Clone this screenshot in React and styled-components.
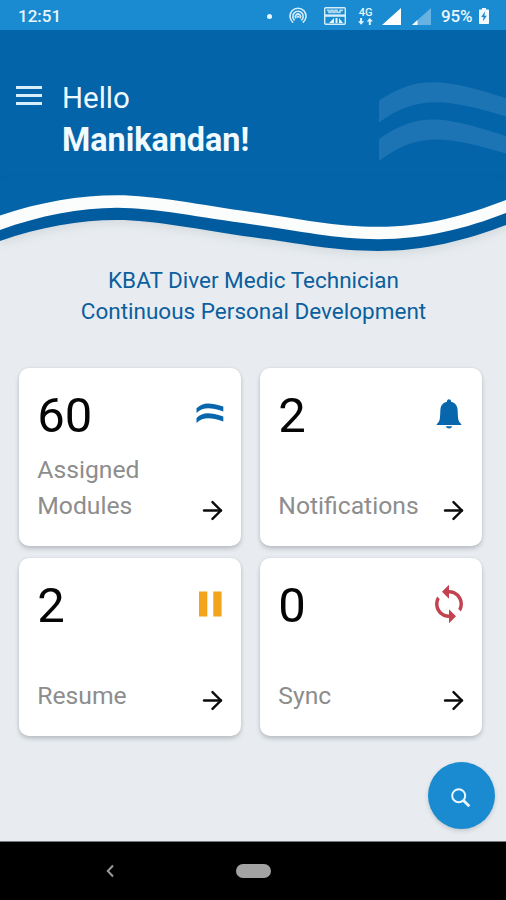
import styled, { createGlobalStyle } from "styled-components";
import { ArrowRight } from "lucide-react";
import { MdSync } from "react-icons/md";

const tiles = [
    { count: "60", label: "Assigned Modules", icon: "modules", inset: -3 },
    { count: "2", label: "Notifications", icon: "bell", inset: -1 },
    { count: "2", label: "Resume", icon: "pause", inset: -4 },
    { count: "0", label: "Sync", icon: "sync", inset: -1 },
];

const HotspotIcon = () => (
    <svg width="18" height="18" viewBox="0 0 18 18" fill="none" stroke="#d5eefb" strokeWidth="1.6">
        <path d="M4.2 15.6A8 8 0 1 1 13.8 15.6" />
        <path d="M5.6 13.4A5.2 5.2 0 1 1 12.4 13.4" />
        <path d="M7.2 11.3A2.5 2.5 0 1 1 10.8 11.3" />
        <circle cx="9" cy="9.6" r="1.2" fill="#d5eefb" stroke="none" />
    </svg>
);

const VolteIcon = () => (
    <svg width="22" height="18" viewBox="0 0 22 18">
        <rect x="0.7" y="0.7" width="20.6" height="16.6" rx="1" fill="none" stroke="#d5eefb" strokeWidth="1.4" />
        <rect x="1" y="7.4" width="20" height="2.4" fill="#d5eefb" />
        <path d="M3 3.4h2v2h2v-2h2v2h2v-2h2v2h3v-2h3" fill="none" stroke="#b5dcf3" strokeWidth="1.6" />
        <path d="M5 16l5-5v5zM11.5 16v-5h2v5zM15 16v-5l4 5z" fill="#e8f6fd" />
    </svg>
);

const DataIcon = () => (
    <svg width="15" height="7" viewBox="0 0 15 7" fill="#e3f3fc">
        <path d="M2.1 0h2v3.2h2.1L3.1 6.8 0 3.2h2.1zM10.8 7h2V3.6h2.1L11.8 0 8.7 3.6h2.1z" />
    </svg>
);

const BatteryIcon = () => (
    <svg width="10" height="16" viewBox="0 0 10 16">
        <path d="M3 0h4v1.5h2.2q.8 0 .8.8v12.9q0 .8-.8.8H.8q-.8 0-.8-.8V2.3q0-.8.8-.8H3z" fill="#eff9fe" />
        <path d="M6 3.5L2.2 9h2.3L4 13.3 7.8 7.8H5.5z" fill="#1a8bd1" />
    </svg>
);

const TileIcon = ({ name }) => {
    if (name === "modules") {
        return (
            <svg width="28" height="21" viewBox="0 0 28 21" fill="#0866ad">
                <path d="M.5 5.3C7-.8 13-1 27.3 3.6v4.8C14 4.2 7.5 4 .5 9.9z" />
                <path d="M.5 15C7 9 13 9 27.3 13.6v4.8C14 14.2 7.5 14 .5 19.9z" />
            </svg>
        );
    }
    if (name === "bell") {
        return (
            <svg width="26" height="30" viewBox="0 0 26 30" fill="#0866ad">
                <path d="M13 .3c1.3 0 2.1.9 2.1 2.4 3.9.8 6.2 3.7 6.5 8 .3 4.800.2 8 .9 10.3.5 1.7 1.5 2.7 2.9 4.4v.6H.6v-.6c1.4-1.7 2.4-2.7 2.9-4.4.7-2.3.6-5.5.9-10.3.3-4.3 2.6-7.2 6.500-8 0-1.500.8-2.400 2.100-2.400z" />
                <path d="M9.9 27.3h6.2c-.5 1.5-1.6 2.2-3.1 2.2s-2.6-.7-3.1-2.2z" />
            </svg>
        );
    }
    if (name === "pause") {
        return (
            <svg width="23" height="26" viewBox="0 0 23 26" fill="#f2a41b">
                <rect x="0" y="0.5" width="8.3" height="25" />
                <rect x="14.3" y="0.5" width="8.3" height="25" />
            </svg>
        );
    }
    return <MdSync size={42} color="#c2434f" />;
};

const App = () => {
    return (
        <Screen>
            <GlobalStyle />
            <StatusBar>
                <Clock>12:51</Clock>
                <StatusIcons>
                    <Dot />
                    <HotspotIcon />
                    <VolteIcon />
                    <Network>
                        <span>4G</span>
                        <DataIcon />
                    </Network>
                    <svg width="19" height="17" viewBox="0 0 19 17">
                        <path d="M0 17L19 0v17z" fill="#fff" />
                    </svg>
                    <svg width="19" height="17" viewBox="0 0 19 17">
                        <path d="M0 17L19 0v17z" fill="#66b3e3" />
                        <path d="M0 17L5.5 12v5z" fill="#fff" />
                    </svg>
                    <Percent>95%</Percent>
                    <BatteryIcon />
                </StatusIcons>
            </StatusBar>
            <Header>
                <Menu aria-label="Menu">
                    <span />
                    <span />
                    <span />
                </Menu>
                <Greeting>
                    <Hello>Hello</Hello>
                    <Name>Manikandan!</Name>
                </Greeting>
                <Ripple width="127" height="80" viewBox="0 0 127 80" fill="#1d74b5">
                    <path d="M0 19.5C38-5 60-4 127 17v18.5C66 17 38 14 0 41.5z" />
                    <path d="M0 58C38 32 60 33 127 55v17.5C66 54 38 51 0 80z" />
                </Ripple>
            </Header>
            <Wave width="506" height="80" viewBox="0 180 506 80">
                <path d="M0 180V241C40 227 80 220 117 220C155 220 200 230 253 237.3C300 243.5 335 251 378 251C425 251 466 240 506 225V180z" fill="#005b9f" />
                <path d="M0 180V230C40 215.5 80 208 117 207.8C155 208 200 217.5 253 224.5C300 231 335 239 378 239.2C425 239 466 228.5 506 213V180z" fill="#fbfcfc" />
                <path d="M0 180V215.5C40 202 80 195.3 117 195.3C155 195.3 200 205 253 212.3C300 219 335 226.8 378 226.8C425 226.8 466 215.5 506 200V180z" fill="#0364a9" />
            </Wave>
            <Title>
                KBAT Diver Medic Technician
                <br />
                Continuous Personal Development
            </Title>
            <Tiles>
                {tiles.map((tile) => (
                    <Tile key={tile.label}>
                        <TileRow>
                            <Count>{tile.count}</Count>
                            <IconSlot $inset={tile.inset}>
                                <TileIcon name={tile.icon} />
                            </IconSlot>
                        </TileRow>
                        <TileRow $bottom>
                            <Label>{tile.label}</Label>
                            <ArrowRight size={29} color="#0b0b0b" strokeWidth={2} />
                        </TileRow>
                    </Tile>
                ))}
            </Tiles>
            <Footer>
                <SearchButton aria-label="Search">
                    <svg width="20" height="20" viewBox="0 0 20 20" fill="none" stroke="#e9f7fe">
                        <circle cx="7.7" cy="7.7" r="6.5" strokeWidth="2" />
                        <path d="M12.5 12.5L18.3 18.3" strokeWidth="2.8" />
                    </svg>
                </SearchButton>
            </Footer>
            <NavBar>
                <svg width="8" height="14" viewBox="0 0 8 14" fill="none" stroke="#9a9a9a" strokeWidth="2">
                    <path d="M7 1.5L1.8 7 7 12.5" />
                </svg>
                <HomePill />
            </NavBar>
        </Screen>
    );
};

const GlobalStyle = createGlobalStyle`
    * {
        box-sizing: border-box;
    }
    body {
        margin: 0;
        background: #e8ecf0;
        font-family: Roboto, "Liberation Sans", sans-serif;
    }
    svg {
        display: block;
        flex-shrink: 0;
    }
`;

const Screen = styled.div`
    display: flex;
    flex-direction: column;
    width: 506px;
    height: 900px;
    overflow: hidden;
    background: #e8ecf0;
`;

const StatusBar = styled.div`
    display: flex;
    align-items: center;
    justify-content: space-between;
    height: 30px;
    padding: 2px 17px 0 18px;
    background: #1a8bd1;
    color: #e9f7fe;
`;

const Clock = styled.div`
    font-size: 17px;
    font-weight: 500;
`;

const StatusIcons = styled.div`
    display: flex;
    align-items: center;
    > :nth-child(2) {
        margin-left: 17px;
    }
    > :nth-child(3) {
        margin-left: 17px;
    }
    > :nth-child(4) {
        margin-left: 12px;
    }
    > :nth-child(5) {
        margin-left: 9px;
    }
    > :nth-child(6) {
        margin-left: 11px;
    }
    > :nth-child(8) {
        margin-left: 5px;
    }
`;

const Dot = styled.span`
    width: 5px;
    height: 5px;
    border-radius: 50%;
    background: #e9f7fe;
`;

const Network = styled.div`
    display: flex;
    flex-direction: column;
    align-items: center;
    width: 15px;
    font-size: 11px;
    font-weight: 500;
    line-height: 10px;
`;

const Percent = styled.div`
    width: 33px;
    margin-left: 10px;
    font-size: 17px;
    font-weight: 500;
    letter-spacing: -0.2px;
`;

const Header = styled.div`
    display: flex;
    height: 150px;
    padding-left: 16px;
    background: #0364a9;
`;

const Menu = styled.button`
    display: flex;
    flex-direction: column;
    gap: 5px;
    width: 26px;
    margin: 56px 0 0;
    padding: 0;
    border: none;
    background: none;
    span {
        height: 3px;
        background: #d8eefa;
    }
`;

const Greeting = styled.div`
    margin: 47px 0 0 20px;
    color: #f1faff;
`;

const Hello = styled.div`
    font-size: 29.5px;
    line-height: 42px;
`;

const Name = styled.div`
    font-size: 32.3px;
    font-weight: 700;
    line-height: 43px;
`;

const Ripple = styled.svg`
    margin: 51px 0 0 auto;
`;

const Wave = styled.svg`
    filter: drop-shadow(0 3px 5px rgba(60, 70, 80, 0.12));
`;

const Title = styled.h1`
    margin: 5px 0 0 1px;
    color: #0b5f9e;
    font-size: 22.5px;
    font-weight: 400;
    line-height: 30.5px;
    text-align: center;
`;

const Tiles = styled.div`
    display: grid;
    grid-template-columns: 222.5px 222.5px;
    grid-auto-rows: 178px;
    gap: 12.4px 18.5px;
    margin: 41.6px 0 0 18.8px;
`;

const Tile = styled.div`
    display: flex;
    flex-direction: column;
    justify-content: space-between;
    padding: 19px 14px 19.5px 18.5px;
    border-radius: 10px;
    background: #fff;
    box-shadow: 0 3px 4px rgba(50, 60, 70, 0.22), 0 0 3px rgba(50, 60, 70, 0.1);
`;

const TileRow = styled.div`
    display: flex;
    justify-content: space-between;
    align-items: ${(props) => (props.$bottom ? "flex-end" : "flex-start")};
    > svg {
        margin-bottom: 1px;
    }
`;

const Count = styled.div`
    color: #050505;
    font-size: 49px;
    line-height: 58px;
`;

const IconSlot = styled.div`
    display: flex;
    align-items: center;
    justify-content: center;
    width: 41px;
    height: 54px;
    margin-right: ${(props) => props.$inset}px;
`;

const Label = styled.div`
    width: 150px;
    color: #8d8d8d;
    font-size: 24.7px;
    line-height: 36px;
    margin-bottom: 2px;
`;

const Footer = styled.div`
    display: flex;
    flex: 1;
    align-items: flex-start;
    justify-content: flex-end;
    padding: 26.2px 11px 0 0;
`;

const SearchButton = styled.button`
    display: flex;
    align-items: center;
    justify-content: center;
    width: 67px;
    height: 67px;
    padding: 5px 1px 0 0;
    border: none;
    border-radius: 50%;
    background: #1a8bd1;
    box-shadow: 0 2px 4px rgba(50, 60, 70, 0.2);
`;

const NavBar = styled.div`
    display: flex;
    align-items: center;
    height: 59px;
    padding-left: 106px;
    border-top: 1px solid #777b7d;
    background: #000;
`;

const HomePill = styled.div`
    width: 35px;
    height: 14px;
    margin-left: 122px;
    border-radius: 7px;
    background: #a3a3a3;
`;

export default App;
